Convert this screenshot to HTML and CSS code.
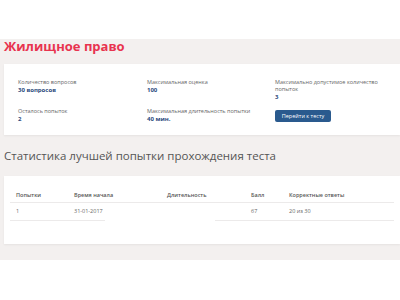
FILE: index.html
```html
<!DOCTYPE html>
<html lang="ru">
<head>
    <meta charset="UTF-8">
    <meta name="viewport" content="width=device-width, initial-scale=1.0">
    <title>Жилищное право</title>
    <link rel="stylesheet" href="styles.css">
</head>
<body>
    <div class="page">
        <h1 class="test-title">Жилищное право</h1>

        <!-- Test info -->
        <div class="card info-card">
            <div class="info-item">
                <div class="info-label">Количество вопросов</div>
                <div class="info-value">30 вопросов</div>
            </div>
            <div class="info-item">
                <div class="info-label">Максимальная оценка</div>
                <div class="info-value">100</div>
            </div>
            <div class="info-item">
                <div class="info-label">Максимально допустимое количество попыток</div>
                <div class="info-value">3</div>
            </div>
            <div class="info-item">
                <div class="info-label">Осталось попыток</div>
                <div class="info-value">2</div>
            </div>
            <div class="info-item">
                <div class="info-label">Максимальная длительность попытки</div>
                <div class="info-value">40 мин.</div>
            </div>
            <div class="info-item">
                <button class="start-button">Перейти к тесту</button>
            </div>
        </div>

        <h2 class="section-title">Статистика лучшей попытки прохождения теста</h2>

        <!-- Best attempt -->
        <div class="card stats-card">
            <table class="stats-table">
                <colgroup>
                    <col style="width: 58px">
                    <col style="width: 37px">
                    <col style="width: 56px">
                    <col style="width: 54px">
                    <col style="width: 30px">
                    <col style="width: 38px">
                    <col>
                </colgroup>
                <thead>
                    <tr>
                        <th>Попытки</th>
                        <th colspan="2">Время начала</th>
                        <th colspan="2">Длительность</th>
                        <th>Балл</th>
                        <th>Корректные ответы</th>
                    </tr>
                </thead>
                <tbody>
                    <tr>
                        <td>1</td>
                        <td>31-01-2017</td>
                        <td colspan="2" class="no-line"></td>
                        <td></td>
                        <td>67</td>
                        <td>20 из 30</td>
                    </tr>
                </tbody>
            </table>
        </div>
    </div>
</body>
</html>
```

FILE: styles.css
```css
* {
    margin: 0;
    padding: 0;
    box-sizing: border-box;
}

body {
    font-family: 'Open Sans', 'Noto Sans', sans-serif;
    background-color: #fff;
    color: #555;
}

.page {
    background-color: #f3f0ef;
    margin-top: 39px;
    padding: 0 0 16px 4px;
}

.test-title {
    font-size: 13px;
    line-height: 14px;
    font-weight: 700;
    color: #e8344f;
}

.card {
    background-color: #fff;
    box-shadow: 0 1px 2px rgba(0, 0, 0, 0.06);
}

/* Info card */
.info-card {
    margin-top: 11px;
    padding: 15px 12px 12px 14px;
    display: grid;
    grid-template-columns: 129px 128px 1fr;
    row-gap: 7px;
}

.info-label {
    font-size: 5.5px;
    line-height: 7px;
    color: #666;
}

.info-value {
    font-size: 6px;
    line-height: 8px;
    font-weight: 700;
    color: #2b4a7c;
}

.start-button {
    display: block;
    margin-top: 2px;
    width: 56px;
    height: 12px;
    background-color: #2a5a8e;
    color: #fff;
    border: none;
    border-radius: 2px;
    font-family: inherit;
    font-size: 5.5px;
    line-height: 12px;
    cursor: pointer;
}

.section-title {
    margin: 14px 0 13px 0;
    font-size: 11.5px;
    line-height: 14px;
    font-weight: 400;
    color: #555;
}

/* Stats card */
.stats-card {
    padding: 13px 6px 23px 6px;
}

.stats-table {
    width: 100%;
    table-layout: fixed;
    border-collapse: collapse;
    font-size: 5.5px;
    line-height: 7px;
}

.stats-table th {
    text-align: left;
    font-weight: 600;
    color: #555;
    padding: 3px 6px;
    border-bottom: 1px solid #eceaea;
    white-space: nowrap;
}

.stats-table td {
    color: #666;
    padding: 5px 6px 5px 6px;
    border-bottom: 1px solid #eceaea;
    white-space: nowrap;
    overflow: visible;
}

.stats-table td.no-line {
    border-bottom: none;
}
```
